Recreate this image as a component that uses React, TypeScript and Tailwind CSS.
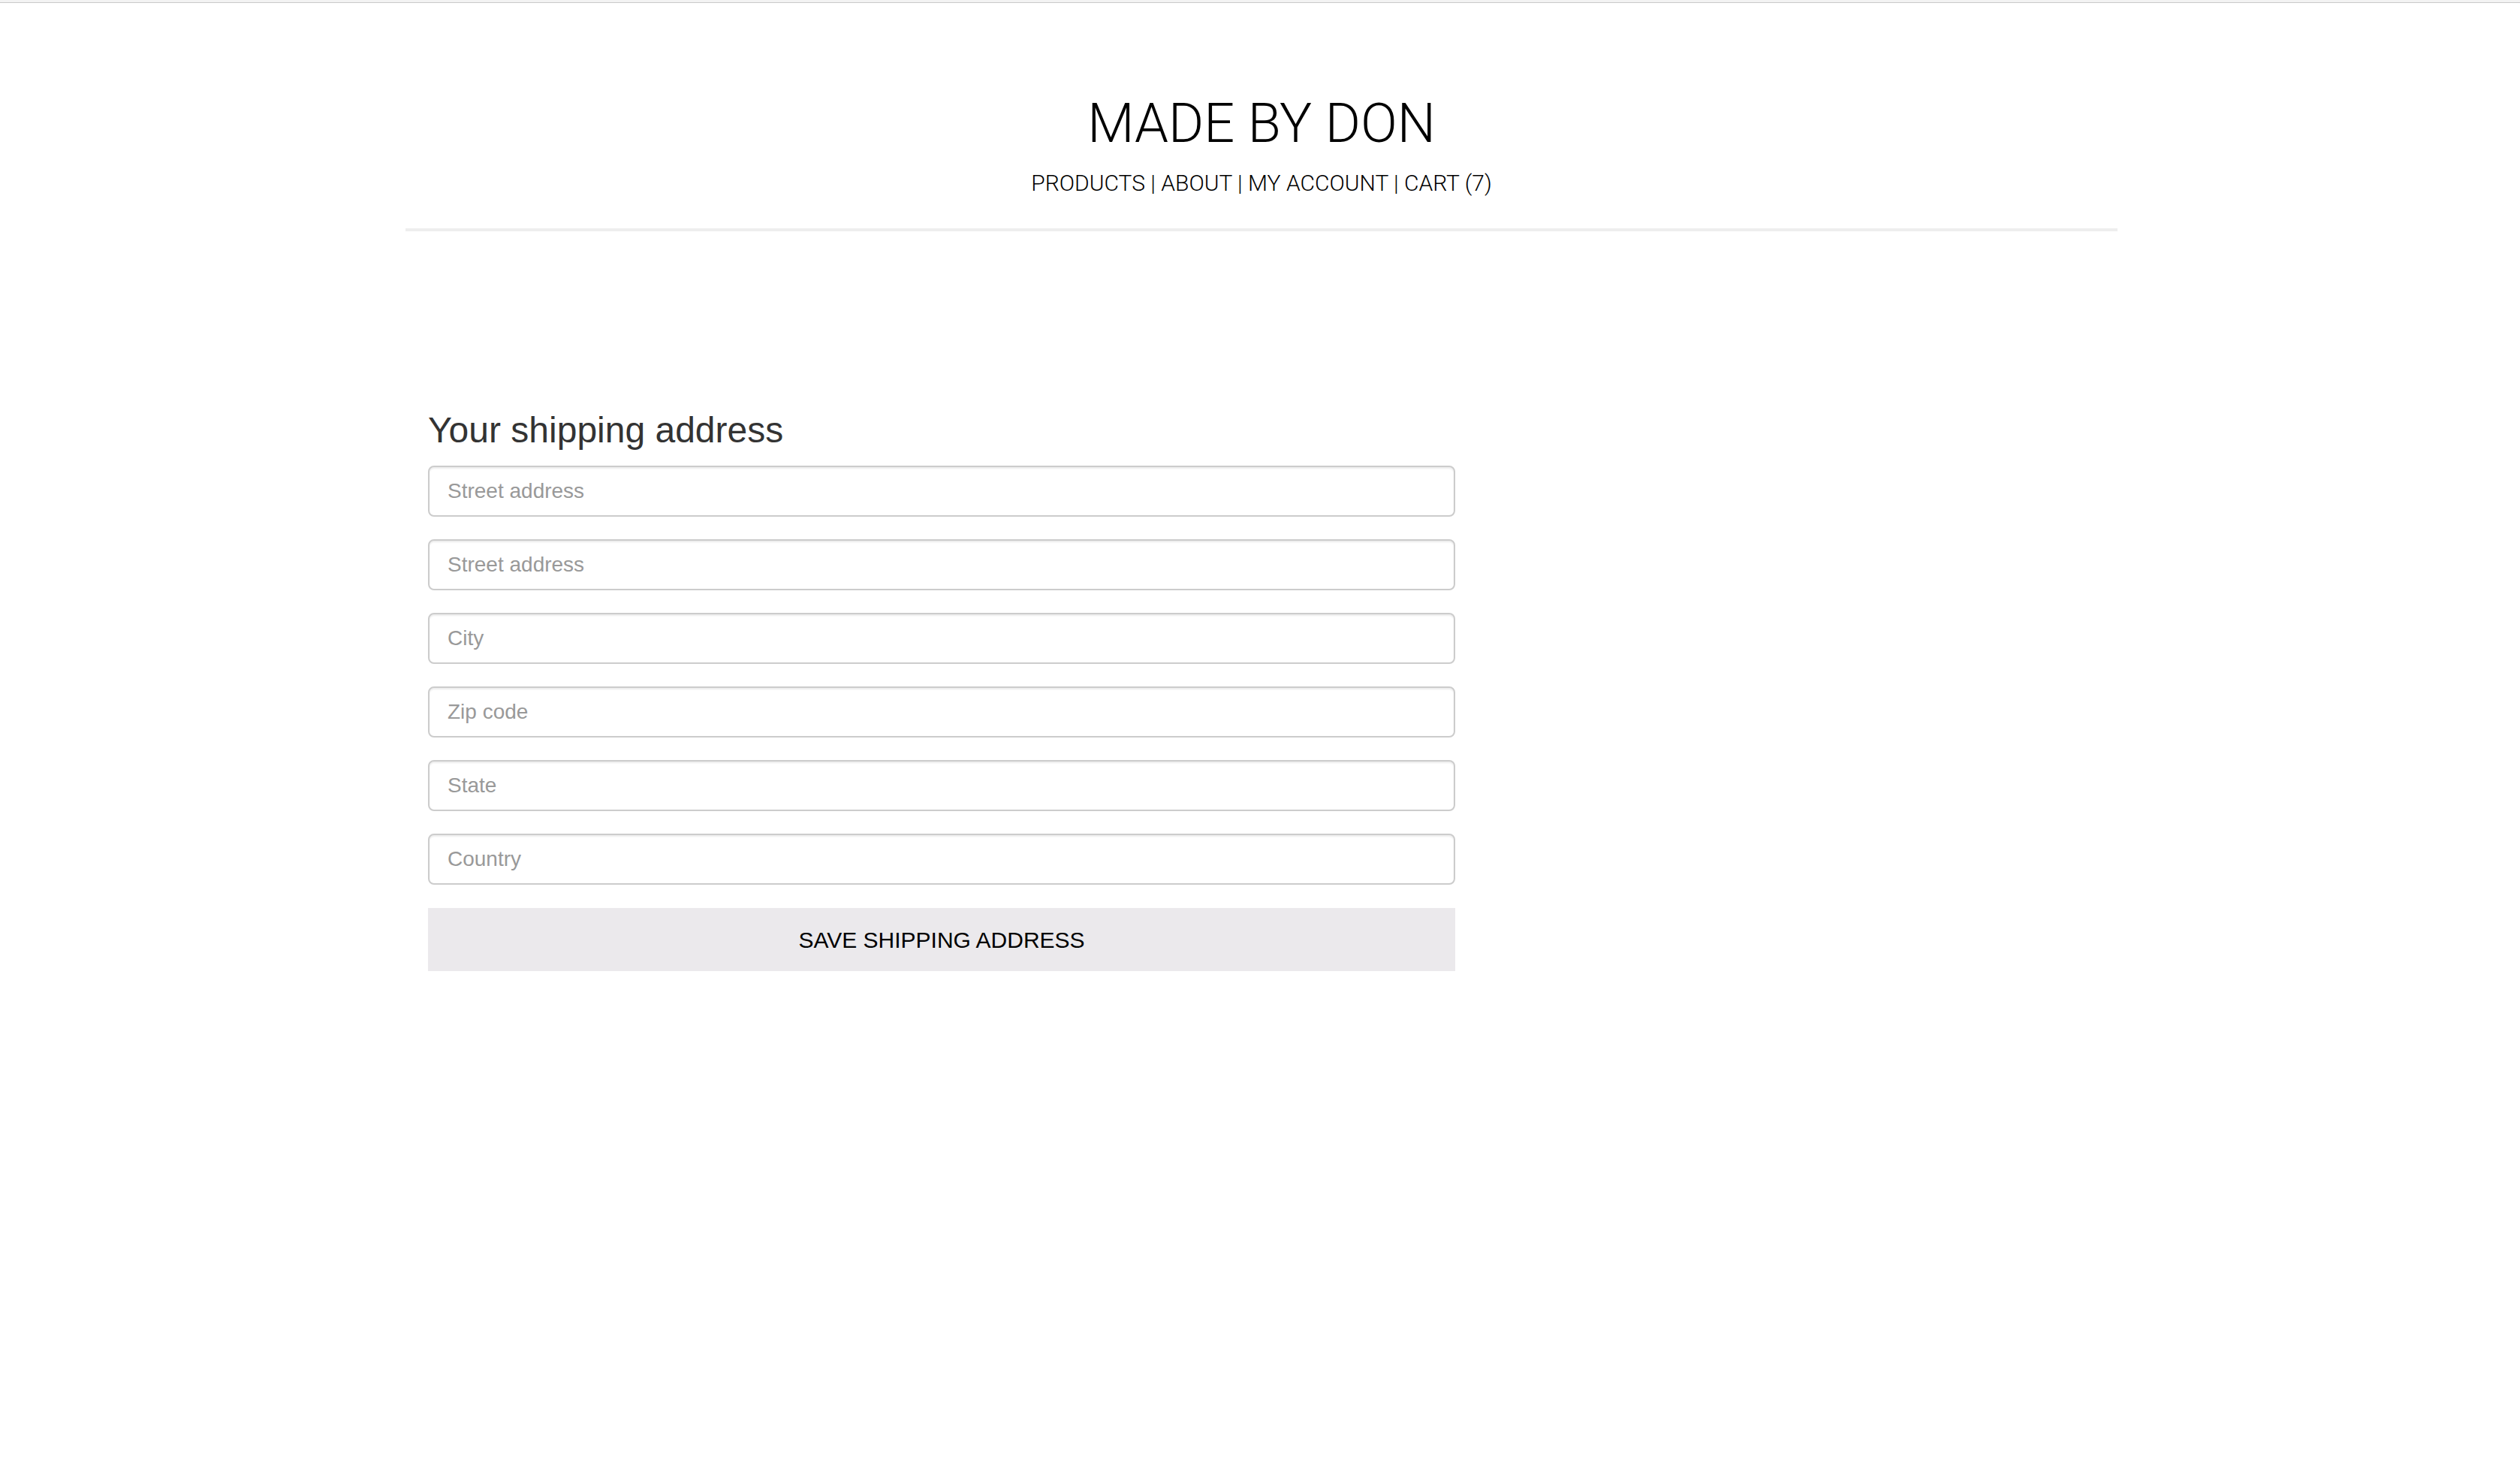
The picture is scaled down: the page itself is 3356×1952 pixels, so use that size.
import React from "react";

const fields = ["Street address", "Street address", "City", "Zip code", "State", "Country"];

export default function App() {
  return (
    <div className="min-h-screen bg-white text-black" style={{ fontFamily: '"Liberation Sans", Arial, sans-serif' }}>
      <div className="h-[3px] bg-[#f3f3f3]" />
      <div className="h-px bg-[#c9c9c9]" />
      <div className="mx-auto w-[2340px] pl-[32px] pr-[28px]">
        <header className="flex flex-col items-center font-['Roboto',sans-serif] font-light">
          <h1 className="mt-[125px] text-[72px] leading-[72px] font-light text-black">MADE BY DON</h1>
          <nav className="mt-[28px] text-[30px] leading-[30px] text-black">
            <a href="#" className="text-black">PRODUCTS</a>
            <span> | </span>
            <a href="#" className="text-black">ABOUT</a>
            <span> | </span>
            <a href="#" className="text-black">MY ACCOUNT</a>
            <span> | </span>
            <a href="#" className="text-black">CART (7)</a>
          </nav>
        </header>
        <div className="mt-[45px] h-[4px] bg-[#eeeeee]" />
        <div className="px-[30px]">
          <form className="w-[1368px] flex flex-col" onSubmit={(e) => e.preventDefault()}>
            <h3 className="mt-[241px] text-[48px] leading-[48px] font-medium text-[#333]">Your shipping address</h3>
            <div className="mt-[23px] flex flex-col gap-[30px]">
              {fields.map((f, i) => (
                <input
                  key={i}
                  type="text"
                  placeholder={f}
                  className="h-[68px] w-full rounded-[8px] border-2 border-[#cccccc] bg-white px-[24px] text-[28px] text-[#555] placeholder:text-[#999] shadow-[inset_0_2px_2px_rgba(0,0,0,0.075)] outline-none"
                />
              ))}
            </div>
            <button
              type="submit"
              className="mt-[31px] h-[84px] w-full bg-[#ebe9ec] text-[30px] text-black"
            >
              SAVE SHIPPING ADDRESS
            </button>
          </form>
        </div>
      </div>
    </div>
  );
}
